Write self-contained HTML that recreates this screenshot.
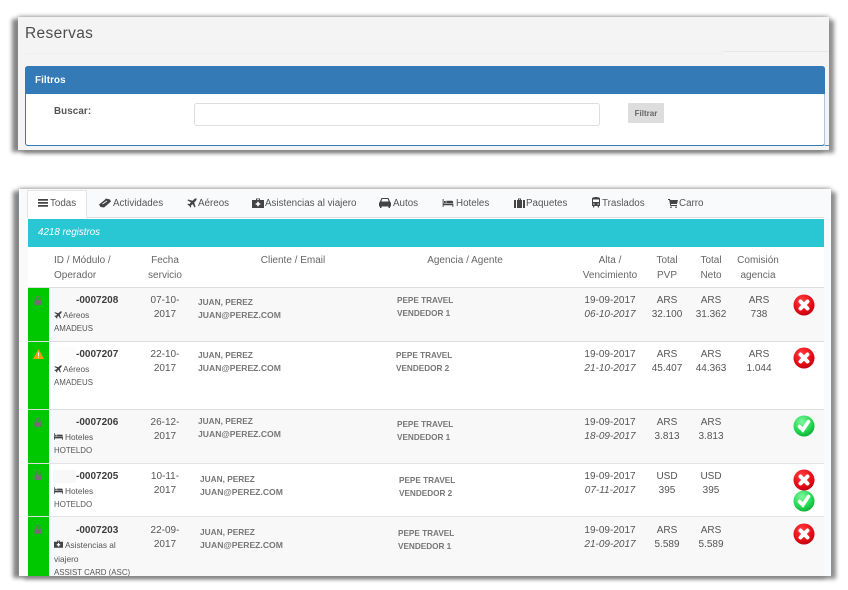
<!DOCTYPE html>
<html><head><meta charset="utf-8"><style>
html,body{margin:0;padding:0;background:#fff;}
body{width:848px;height:590px;overflow:hidden;position:relative;font-family:"Liberation Sans",sans-serif;color:#555;}
#w{position:absolute;left:0;top:0;width:848px;height:590px;filter:blur(.35px);}
.a,.t,.c,svg.i{position:absolute;}
.t,.c{white-space:nowrap;font-size:10px;line-height:14px;}
.c{text-align:center;transform:translateX(-50%);}
.b{font-weight:bold;}
.s{font-size:8.300px;line-height:14px;}
.u{font-size:7.900px;line-height:14px;}
.tab{font-size:9.800px;color:#555;}
.cl{font-weight:bold;color:#777;line-height:13px;font-size:8.300px;}
.cl span{font-size:8.600px;}
.cl2{font-weight:bold;color:#777;line-height:13px;font-size:8.200px;}
.h{color:#666;font-size:10px;line-height:15px;}
.n{font-size:10px;}
svg.i{fill:#444;}
svg.lk{fill:#707070;}
.shadow{box-shadow:-6px 2px 4px #868686,5px 3px 4px #8f8f8f,0 -1px 4px #aaa;}
</style></head><body><div id="w">
<svg width="0" height="0" style="position:absolute"><defs>
<radialGradient id="r" cx=".4" cy=".3" r=".8"><stop offset="0" stop-color="#ff4040"/><stop offset=".6" stop-color="#e80c16"/><stop offset="1" stop-color="#b00010"/></radialGradient>
<radialGradient id="g" cx=".4" cy=".3" r=".8"><stop offset="0" stop-color="#80f8a0"/><stop offset=".6" stop-color="#22d850"/><stop offset="1" stop-color="#0aa030"/></radialGradient>
<symbol id="x" viewBox="0 0 22 22"><circle cx="11" cy="11" r="10.5" fill="url(#r)"/><path d="M7.500 7.500L14.500 14.500M14.500 7.500L7.500 14.500" stroke="#fff" stroke-width="4" stroke-linecap="round"/></symbol>
<symbol id="k" viewBox="0 0 22 22"><circle cx="11" cy="11" r="10.5" fill="url(#g)"/><path d="M6.500 11.500L9.800 15L15.500 6.500" stroke="#fff" stroke-width="3.600" fill="none" stroke-linecap="round"/></symbol>
<symbol id="lock" viewBox="0 0 8 9"><path d="M.5 4h7v5h-7z"/><path d="M2 4V2.600a2 2 0 0 1 4 0V4" fill="none" stroke="#707070" stroke-width="1.200"/></symbol>
<symbol id="plane" viewBox="0 0 10 10"><path d="M9.500 .5C8.500 0 7.500 .8 6.500 1.800L5.500 2.800 1.200 1.500 .4 2.300 3.900 4.400 2.500 6 1 5.800 .4 6.400 2.200 7.800 3.600 9.600 4.200 9 4 7.500 5.600 6.100 7.700 9.600 8.500 8.800 7.200 4.500 8.200 3.500C9.200 2.500 10 1.500 9.500 .5z"/></symbol>
<symbol id="bed" viewBox="0 0 12 9"><path d="M0 0h1v5h11v4h-1V7H1v2H0z"/><path d="M1.500 2.200h2v2.300h-2zM4.200 2h6a1.500 1.500 0 0 1 1.500 1.500v1H4.200z"/></symbol>
<symbol id="med" viewBox="0 0 12 10"><path d="M4 2V.5h4V2h4v8H0V2zM5 2h2V1.300H5z" fill-rule="evenodd"/><path d="M5.200 3.700h1.600v1.500h1.500v1.600H6.800v1.500H5.200V6.800H3.700V5.200h1.500z" fill="#fff"/></symbol>
</defs></svg>

<!-- top panel -->
<div class="a shadow" style="left:18px;top:17px;width:811px;height:133px;background:#f4f4f4"></div>
<div class="a" style="left:25px;top:53px;width:697px;height:1px;background:#eee"></div>
<div class="a" style="left:722px;top:51px;width:107px;height:1px;background:#e8e8e8"></div>
<div class="t" style="left:25px;top:24px;font-size:15.500px;line-height:20px;color:#4d4d4d;letter-spacing:.35px">Reservas</div>
<div class="a" style="left:25px;top:66px;width:800px;height:80px;box-sizing:border-box;background:#fff;border:1px solid #337ab7;border-top:0;border-radius:3px"></div>
<div class="a" style="left:25px;top:66px;width:800px;height:28px;background:#337ab7;border-radius:3px 3px 0 0"></div>
<div class="a" style="left:824px;top:94px;width:1px;height:52px;background:#a8c6e2"></div>
<div class="a" style="left:825px;top:145px;width:4px;height:1px;background:#5d8fbd"></div>
<div class="t b" style="left:35px;top:74px;color:#fff;font-size:9.800px;letter-spacing:.1px">Filtros</div>
<div class="t b" style="left:54px;top:105px;font-size:9.800px;color:#555;letter-spacing:.1px">Buscar:</div>
<div class="a" style="left:194px;top:103px;width:406px;height:23px;box-sizing:border-box;background:#fff;border:1px solid #ddd;border-radius:3px"></div>
<div class="a" style="left:628px;top:103px;width:36px;height:20px;background:#ddd;border-radius:1px"></div>
<div class="c b" style="left:646px;top:107px;font-size:8px;color:#666">Filtrar</div>

<!-- bottom panel -->
<div class="a shadow" style="left:19px;top:189px;width:812px;height:387px;background:#fff"></div>
<div class="a" style="left:19px;top:189px;width:812px;height:29px;background:#f9fafc"></div>
<div class="a" style="left:19px;top:218px;width:9px;height:358px;background:#fafafa"></div>
<div class="a" style="left:824px;top:218px;width:7px;height:358px;background:#f9fafc"></div>
<div class="a" style="left:28px;top:217px;width:796px;height:1px;background:#ddd"></div>
<div class="a" style="left:27px;top:190px;width:60px;height:28px;box-sizing:border-box;background:#fff;border:1px solid #e4e4e4;border-bottom:0"></div>

<!-- tabs -->
<svg class="i" style="left:38px;top:199px" width="10" height="8" viewBox="0 0 10 8"><path d="M0 0h10v1.800H0zM0 3h10v1.800H0zM0 6h10v1.800H0z"/></svg>
<div class="t tab" style="left:50px;top:197px">Todas</div>
<svg class="i" style="left:99px;top:198px" width="12" height="10" viewBox="0 0 12 10"><path d="M0 6.500L5 2.500 7 .5 11 1.500 12 3.500 8 7 5 9.500 1.500 9z"/><path d="M3.500 6L8 3" stroke="#f9fafc" stroke-width=".8"/></svg>
<div class="t tab" style="left:113px;top:197px">Actividades</div>
<svg class="i" style="left:187px;top:198px" width="10" height="10"><use href="#plane"/></svg>
<div class="t tab" style="left:198px;top:197px">Aéreos</div>
<svg class="i" style="left:252px;top:198px" width="12" height="10"><use href="#med"/></svg>
<div class="t tab" style="left:265px;top:197px">Asistencias al viajero</div>
<svg class="i" style="left:379px;top:198px" width="12" height="10" viewBox="0 0 12 10"><path d="M2.500 0h7L11 3.500 12 5v3.500h-1V10H9.500V8.500h-7V10H1V8.500H0V5l1-1.500zM3.200 1L2.400 3.500h7.200L8.800 1z"/></svg>
<div class="t tab" style="left:393px;top:197px">Autos</div>
<svg class="i" style="left:442px;top:199px" width="12" height="8"><use href="#bed"/></svg>
<div class="t tab" style="left:456px;top:197px">Hoteles</div>
<svg class="i" style="left:514px;top:198px" width="11" height="10" viewBox="0 0 11 10"><path d="M0 2h2v8H0zM3 2h1V.5h3V2h1v8H3zM5 2h1V1.200H5zM9 2h2v8H9z"/></svg>
<div class="t tab" style="left:526px;top:197px">Paquetes</div>
<svg class="i" style="left:591px;top:197px" width="10" height="11" viewBox="0 0 10 11"><path d="M1 1.500C1 .5 3 0 5 0s4 .5 4 1.500V9H8v1.500H6.800V9H3.200v1.500H2V9H1zM2 2.500V5h6V2.500zM2.300 6.500v1.200h1.200V6.500zM6.500 6.500v1.200h1.200V6.500z" fill-rule="evenodd"/></svg>
<div class="t tab" style="left:602px;top:197px">Traslados</div>
<svg class="i" style="left:668px;top:199px" width="10" height="9" viewBox="0 0 10 9"><path d="M0 0h2l.4 1H10L9 5H3l.2 1H9v1H2.300L1.200 1H0z"/><circle cx="3" cy="8.200" r=".8"/><circle cx="8" cy="8.200" r=".8"/></svg>
<div class="t tab" style="left:679px;top:197px">Carro</div>

<!-- teal -->
<div class="a" style="left:28px;top:219px;width:796px;height:28px;background:#29c6d3"></div>
<div class="t" style="left:38px;top:226px;color:#fff;font-style:italic;font-size:9.800px">4218 registros</div>

<!-- header -->
<div class="t h" style="left:54px;top:253px">ID / Módulo /<br>Operador</div>
<div class="c h" style="left:165px;top:253px">Fecha<br>servicio</div>
<div class="c h" style="left:293px;top:253px">Cliente / Email</div>
<div class="c h" style="left:465px;top:253px">Agencia / Agente</div>
<div class="c h" style="left:610px;top:253px">Alta /<br>Vencimiento</div>
<div class="c h" style="left:667px;top:253px">Total<br>PVP</div>
<div class="c h" style="left:711px;top:253px">Total<br>Neto</div>
<div class="c h" style="left:758px;top:253px">Comisión<br>agencia</div>

<!-- rows -->
<div class="a" style="left:28px;top:287px;width:796px;height:1px;background:#ddd"></div>
<div class="a" style="left:28px;top:288px;width:796px;height:53px;background:#f8f8f8"></div>
<div class="a" style="left:28px;top:341px;width:796px;height:1px;background:#ddd"></div>
<div class="a" style="left:28px;top:342px;width:796px;height:67px;background:#fff"></div>
<div class="a" style="left:28px;top:409px;width:796px;height:1px;background:#ddd"></div>
<div class="a" style="left:28px;top:410px;width:796px;height:53px;background:#f8f8f8"></div>
<div class="a" style="left:28px;top:463px;width:796px;height:1px;background:#e4e4e4"></div>
<div class="a" style="left:28px;top:464px;width:796px;height:52px;background:#fff"></div>
<div class="a" style="left:28px;top:516px;width:796px;height:1px;background:#e4e4e4"></div>
<div class="a" style="left:28px;top:517px;width:796px;height:59px;background:#f8f8f8"></div>
<div class="a" style="left:28px;top:288px;width:21px;height:288px;background:#00c800"></div>
<div class="a" style="left:28px;top:341px;width:21px;height:1px;background:#ddd"></div>
<div class="a" style="left:28px;top:409px;width:21px;height:1px;background:#ddd"></div>
<div class="a" style="left:28px;top:463px;width:21px;height:1px;background:#ddd"></div>
<div class="a" style="left:28px;top:516px;width:21px;height:1px;background:#ddd"></div>
<div class="a" style="left:54px;top:347px;width:22px;height:14px;background:#fcfcfc"></div>
<div class="a" style="left:53px;top:470px;width:23px;height:13px;background:#f8f8f8"></div>

<svg class="i lk" style="left:34px;top:296px" width="8" height="9"><use href="#lock"/></svg>
<svg class="i" style="left:33px;top:349px" width="11" height="10" viewBox="0 0 11 10"><path d="M5.500 0L11 10H0z" fill="#f59a00"/><path d="M5 3.500h1v3.500H5zM5 7.800h1v1H5z" fill="#fff"/></svg>
<svg class="i lk" style="left:34px;top:418px" width="8" height="9"><use href="#lock"/></svg>
<svg class="i lk" style="left:34px;top:471px" width="8" height="9"><use href="#lock"/></svg>
<svg class="i lk" style="left:34px;top:525px" width="8" height="9"><use href="#lock"/></svg>

<!-- row 1 -->
<div class="t b n" style="left:76px;top:294px;color:#3d3d3d">-0007208</div>
<svg class="i" style="left:54px;top:311px" width="8" height="8"><use href="#plane"/></svg>
<div class="t s" style="left:63px;top:308px">Aéreos</div>
<div class="t u" style="left:54px;top:322px">AMADEUS</div>
<div class="c n" style="left:165px;top:294px">07-10-<br>2017</div>
<div class="t cl" style="left:198px;top:296px">JUAN, PEREZ<br><span>JUAN@PEREZ.COM</span></div>
<div class="t cl2" style="left:397px;top:294px">PEPE TRAVEL<br>VENDEDOR 1</div>
<div class="c n" style="left:610px;top:294px">19-09-2017<br><i>06-10-2017</i></div>
<div class="c n" style="left:667px;top:294px">ARS<br>32.100</div>
<div class="c n" style="left:711px;top:294px">ARS<br>31.362</div>
<div class="c n" style="left:759px;top:294px">ARS<br>738</div>
<svg class="a" style="left:793px;top:294px" width="22" height="22"><use href="#x"/></svg>

<!-- row 2 -->
<div class="t b n" style="left:76px;top:348px;color:#3d3d3d">-0007207</div>
<svg class="i" style="left:54px;top:365px" width="8" height="8"><use href="#plane"/></svg>
<div class="t s" style="left:63px;top:362px">Aéreos</div>
<div class="t u" style="left:54px;top:376px">AMADEUS</div>
<div class="c n" style="left:165px;top:348px">22-10-<br>2017</div>
<div class="t cl" style="left:198px;top:349px">JUAN, PEREZ<br><span>JUAN@PEREZ.COM</span></div>
<div class="t cl2" style="left:396px;top:349px">PEPE TRAVEL<br>VENDEDOR 2</div>
<div class="c n" style="left:610px;top:348px">19-09-2017<br><i>21-10-2017</i></div>
<div class="c n" style="left:667px;top:348px">ARS<br>45.407</div>
<div class="c n" style="left:711px;top:348px">ARS<br>44.363</div>
<div class="c n" style="left:759px;top:348px">ARS<br>1.044</div>
<svg class="a" style="left:793px;top:347px" width="22" height="22"><use href="#x"/></svg>

<!-- row 3 -->
<div class="t b n" style="left:76px;top:416px;color:#3d3d3d">-0007206</div>
<svg class="i" style="left:54px;top:433px" width="9" height="7"><use href="#bed"/></svg>
<div class="t s" style="left:65px;top:430px">Hoteles</div>
<div class="t u" style="left:54px;top:444px">HOTELDO</div>
<div class="c n" style="left:165px;top:416px">26-12-<br>2017</div>
<div class="t cl" style="left:198px;top:415px">JUAN, PEREZ<br><span>JUAN@PEREZ.COM</span></div>
<div class="t cl2" style="left:397px;top:418px">PEPE TRAVEL<br>VENDEDOR 1</div>
<div class="c n" style="left:610px;top:416px">19-09-2017<br><i>18-09-2017</i></div>
<div class="c n" style="left:667px;top:416px">ARS<br>3.813</div>
<div class="c n" style="left:711px;top:416px">ARS<br>3.813</div>
<svg class="a" style="left:793px;top:415px" width="22" height="22"><use href="#k"/></svg>

<!-- row 4 -->
<div class="t b n" style="left:76px;top:470px;color:#3d3d3d">-0007205</div>
<svg class="i" style="left:54px;top:487px" width="9" height="7"><use href="#bed"/></svg>
<div class="t s" style="left:65px;top:484px">Hoteles</div>
<div class="t u" style="left:54px;top:498px">HOTELDO</div>
<div class="c n" style="left:165px;top:470px">10-11-<br>2017</div>
<div class="t cl" style="left:200px;top:473px">JUAN, PEREZ<br><span>JUAN@PEREZ.COM</span></div>
<div class="t cl2" style="left:399px;top:474px">PEPE TRAVEL<br>VENDEDOR 2</div>
<div class="c n" style="left:610px;top:470px">19-09-2017<br><i>07-11-2017</i></div>
<div class="c n" style="left:667px;top:470px">USD<br>395</div>
<div class="c n" style="left:711px;top:470px">USD<br>395</div>
<svg class="a" style="left:793px;top:469px" width="22" height="22"><use href="#x"/></svg>
<svg class="a" style="left:793px;top:490px" width="22" height="22"><use href="#k"/></svg>

<!-- row 5 -->
<div class="t b n" style="left:76px;top:524px;color:#3d3d3d">-0007203</div>
<svg class="i" style="left:54px;top:540px" width="9" height="8"><use href="#med"/></svg>
<div class="t s" style="left:65px;top:538px">Asistencias al</div>
<div class="t s" style="left:54px;top:552px">viajero</div>
<div class="t u" style="left:54px;top:566px;height:10px;overflow:hidden">ASSIST CARD (ASC)</div>
<div class="c n" style="left:165px;top:524px">22-09-<br>2017</div>
<div class="t cl" style="left:200px;top:526px">JUAN, PEREZ<br><span>JUAN@PEREZ.COM</span></div>
<div class="t cl2" style="left:398px;top:527px">PEPE TRAVEL<br>VENDEDOR 1</div>
<div class="c n" style="left:610px;top:524px">19-09-2017<br><i>21-09-2017</i></div>
<div class="c n" style="left:667px;top:524px">ARS<br>5.589</div>
<div class="c n" style="left:711px;top:524px">ARS<br>5.589</div>
<svg class="a" style="left:793px;top:523px" width="22" height="22"><use href="#x"/></svg>
</div></body></html>
